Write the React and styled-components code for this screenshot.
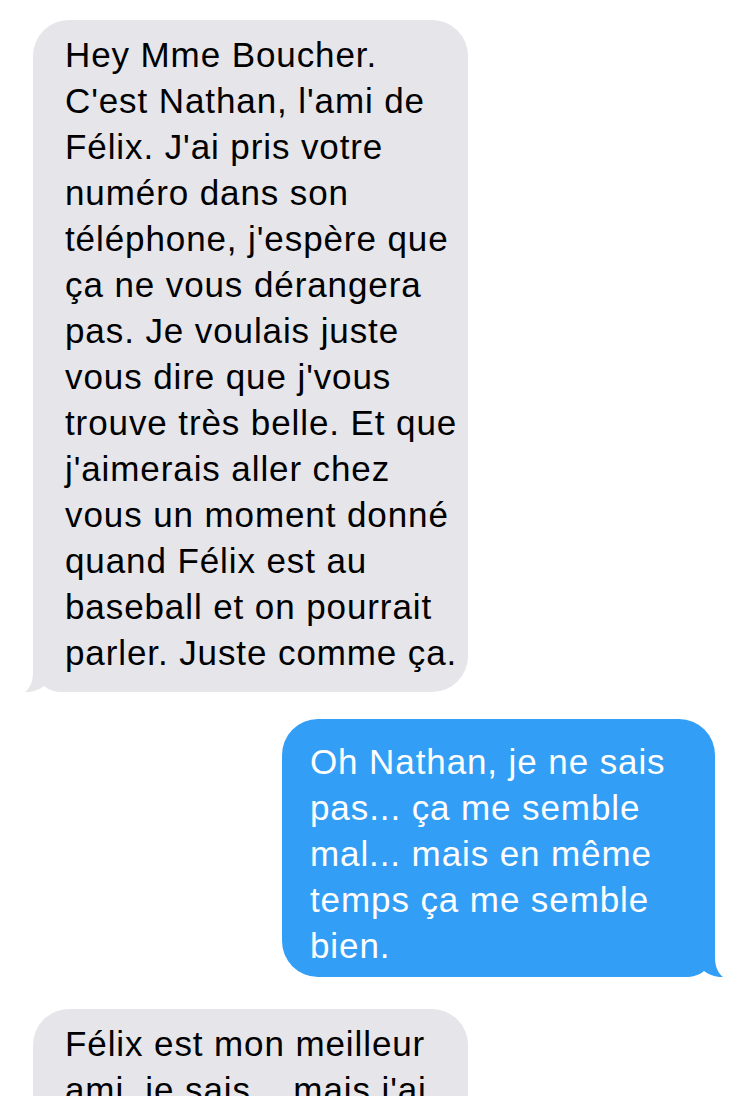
import React from "react";
import styled, { createGlobalStyle } from "styled-components";

const Global = createGlobalStyle`
  html, body { margin: 0; padding: 0; background: #ffffff; }
  body { font-family: "Liberation Sans", Arial, sans-serif; }
`;

const Thread = styled.div`
  display: flex;
  flex-direction: column;
  width: 750px;
  box-sizing: border-box;
  padding: 20px 35px 0 33px;
`;

const Row = styled.div`
  display: flex;
  justify-content: ${(p) => (p.$out ? "flex-end" : "flex-start")};
  margin-top: ${(p) => p.$gap || 0}px;
`;

const Bubble = styled.div`
  position: relative;
  box-sizing: border-box;
  width: ${(p) => p.$width}px;
  padding: ${(p) => (p.$out ? "20px 16px 8px 28px" : "12px 16px 16px 32px")};
  background: ${(p) => (p.$out ? "#329ef5" : "#e5e5ea")};
  color: ${(p) => (p.$out ? "#ffffff" : "#000000")};
  border-radius: 36px;
  font-size: 35px;
  line-height: 46px;
  letter-spacing: 0.9px;
`;

const Line = styled.span`
  display: block;
  white-space: nowrap;
  position: relative;
  z-index: 1;
`;

const TailSvg = styled.svg`
  position: absolute;
  bottom: 0;
  width: 50px;
  height: 36px;
  ${(p) => (p.$out ? "right: -10px; transform: scaleX(-1);" : "left: -10px;")}
`;

const Tail = ({ out, color }) => (
  <TailSvg $out={out} viewBox="0 0 50 36" aria-hidden="true">
    <path
      d="M10,0 L10,16 C10,26 7,32 2,36 C9,36.5 16,34 21,30 C26,34 32,36 40,36 L50,36 L50,0 Z"
      fill={color}
    />
  </TailSvg>
);

const Message = ({ out, width, gap, lines }) => (
  <Row $out={out} $gap={gap}>
    <Bubble $out={out} $width={width}>
      {lines.map((l, i) => (
        <Line key={i}>{l}</Line>
      ))}
      <Tail out={out} color={out ? "#329ef5" : "#e5e5ea"} />
    </Bubble>
  </Row>
);

const messages = [
  {
    out: false,
    width: 435,
    gap: 0,
    lines: [
      "Hey Mme Boucher.",
      "C'est Nathan, l'ami de",
      "Félix. J'ai pris votre",
      "numéro dans son",
      "téléphone, j'espère que",
      "ça ne vous dérangera",
      "pas. Je voulais juste",
      "vous dire que j'vous",
      "trouve très belle. Et que",
      "j'aimerais aller chez",
      "vous un moment donné",
      "quand Félix est au",
      "baseball et on pourrait",
      "parler. Juste comme ça.",
    ],
  },
  {
    out: true,
    width: 433,
    gap: 27,
    lines: [
      "Oh Nathan, je ne sais",
      "pas... ça me semble",
      "mal... mais en même",
      "temps ça me semble",
      "bien.",
    ],
  },
  {
    out: false,
    width: 435,
    gap: 32,
    lines: ["Félix est mon meilleur", "ami, je sais... mais j'ai"],
  },
];

export default function App() {
  return (
    <>
      <Global />
      <Thread>
        {messages.map((m, i) => (
          <Message key={i} {...m} />
        ))}
      </Thread>
    </>
  );
}
